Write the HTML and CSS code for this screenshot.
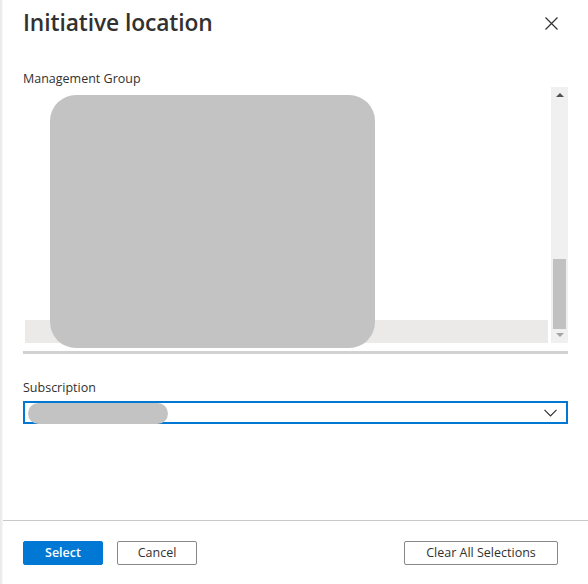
FILE: index.html
```html
<!DOCTYPE html>
<html>
<head>
<meta charset="utf-8">
<link rel="stylesheet" href="styles.css">
</head>
<body>
<div class="edge"></div>
<div class="panel">
  <header class="head">
    <h1 class="title">Initiative location</h1>
    <button class="close" aria-label="Close">
      <svg width="13" height="13" viewBox="0 0 13 13"><path d="M0.5 0.5 L12.5 12.5 M12.5 0.5 L0.5 12.5" stroke="#323130" stroke-width="1.2" fill="none"/></svg>
    </button>
  </header>
  <div class="body">
    <div class="label mg-label">Management Group</div>
    <div class="tree">
      <div class="tree-view">
        <div class="tree-content"></div>
        <div class="hscroll"></div>
        <div class="redact big"></div>
      </div>
      <div class="vscroll">
        <div class="arrow up"></div>
        <div class="track"><div class="thumb"></div></div>
        <div class="arrow down"></div>
      </div>
    </div>
    <div class="rule"></div>
    <div class="label sub-label">Subscription</div>
    <div class="dropdown">
      <div class="redact small"></div>
      <svg class="chev" width="13" height="8" viewBox="0 0 13 8"><path d="M0.5 0.8 L6.5 6.8 L12.5 0.8" stroke="#323130" stroke-width="1.2" fill="none"/></svg>
    </div>
  </div>
  <footer class="foot">
    <div class="left-btns">
      <button class="btn primary">Select</button>
      <button class="btn">Cancel</button>
    </div>
    <button class="btn clear">Clear All Selections</button>
  </footer>
</div>
</body>
</html>
```
FILE: styles.css
```css
html, body {
  margin: 0;
  padding: 0;
  background: #ffffff;
  width: 588px;
  height: 584px;
  overflow: hidden;
  font-family: "Open Sans", "Noto Sans", sans-serif;
  color: #323130;
}
body {
  position: relative;
}
.edge {
  position: absolute;
  left: 0;
  top: 0;
  width: 3px;
  height: 584px;
  background: linear-gradient(to right, #e6e6e6, #f8f8f8);
}
.panel {
  display: flex;
  flex-direction: column;
  height: 584px;
}
.head {
  display: flex;
  justify-content: space-between;
  align-items: flex-start;
  padding: 8px 30px 0 23px;
  height: 56px;
  box-sizing: border-box;
}
.title {
  margin: 0;
  font-size: 22.8px;
  font-weight: 600;
  line-height: 30px;
  letter-spacing: -0.1px;
  color: #323130;
}
.close {
  border: 0;
  background: none;
  padding: 0;
  margin-top: 9px;
  width: 13px;
  height: 13px;
  display: block;
}
.close svg { display: block; }
.body {
  flex: 1;
  padding: 0 20px 0 23px;
}
.label {
  font-size: 12.5px;
  line-height: 18px;
  color: #323130;
}
.mg-label {
  margin-top: 14px;
}
.tree {
  display: flex;
  height: 256px;
  margin-top: -1px;
}
.tree-view {
  flex: 1;
  position: relative;
  display: flex;
  flex-direction: column;
}
.tree-content {
  flex: 1;
}
.hscroll {
  height: 23px;
  margin-left: 2px;
  margin-right: 3px;
  background: #ebeae8;
}
.vscroll {
  width: 17px;
  background: #f0f0f0;
  display: flex;
  flex-direction: column;
  align-items: center;
}
.arrow {
  width: 0;
  height: 0;
  border-left: 4px solid transparent;
  border-right: 4px solid transparent;
}
.arrow.up {
  margin-top: 6px;
  border-bottom: 4px solid #505050;
}
.arrow.down {
  margin-bottom: 6px;
  border-top: 4px solid #a3a3a3;
}
.track {
  flex: 1;
  width: 100%;
  display: flex;
  flex-direction: column;
  justify-content: flex-end;
  align-items: center;
  padding-bottom: 4px;
}
.thumb {
  width: 13px;
  height: 70px;
  background: #c1c1c1;
}
.redact {
  background: #c3c3c3;
  position: absolute;
}
.redact.big {
  left: 27px;
  top: 8px;
  width: 325px;
  height: 253px;
  border-radius: 26px;
}
.rule {
  height: 3px;
  background: #d2d2d2;
  margin-top: 8px;
}
.sub-label {
  margin-top: 25px;
}
.dropdown {
  position: relative;
  margin-top: 4px;
  height: 23px;
  border: 2px solid #0078d4;
  box-sizing: border-box;
  display: flex;
  align-items: center;
  justify-content: flex-end;
  padding-right: 9px;
}
.redact.small {
  left: 3px;
  top: 0;
  width: 140px;
  height: 21px;
  border-radius: 11px;
}
.chev { display: block; }
.foot {
  border-top: 1px solid #c8c8c8;
  margin-left: 3px;
  height: 64px;
  box-sizing: border-box;
  display: flex;
  justify-content: space-between;
  align-items: flex-start;
  padding: 20px 30px 0 20px;
}
.left-btns {
  display: flex;
  gap: 14px;
}
.btn {
  font-family: "Open Sans", "Noto Sans", sans-serif;
  font-size: 12.5px;
  height: 24px;
  width: 80px;
  box-sizing: border-box;
  border: 1px solid #8a8886;
  border-radius: 2px;
  background: #ffffff;
  color: #323130;
  padding: 0;
  line-height: 22px;
}
.btn.primary {
  background: #0078d4;
  border-color: #0078d4;
  color: #ffffff;
  font-weight: 600;
}
.btn.clear {
  width: 154px;
}
```
